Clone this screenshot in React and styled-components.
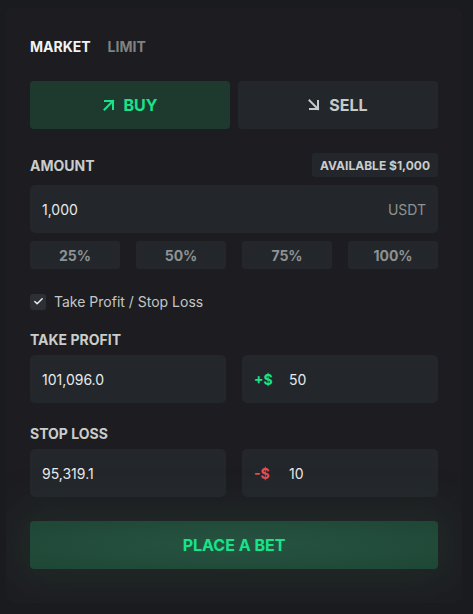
import React, { useState } from "react";
import styled, { createGlobalStyle } from "styled-components";
import { Check } from "lucide-react";

const GlobalStyle = createGlobalStyle`
  html, body {
    margin: 0;
    padding: 0;
    background: #1a1b1f;
    font-family: "Inter", "Noto Sans", sans-serif;
  }
`;

// small diagonal arrow, pointing up-right or down-right
const Arrow = ({ down }) => (
  <svg width="12" height="12" viewBox="0 0 12 12" fill="none" stroke="currentColor" strokeWidth="2" strokeLinecap="square">
    {down ? (
      <>
        <path d="M1.5 1.5 L10 10" />
        <path d="M2 10 H10 V2" />
      </>
    ) : (
      <>
        <path d="M1.5 10.5 L10 2" />
        <path d="M2 2 H10 V10" />
      </>
    )}
  </svg>
);

function App() {
  const [mode, setMode] = useState("market");
  const [side, setSide] = useState("buy");
  const [tpsl, setTpsl] = useState(true);

  return (
    <>
      <GlobalStyle />
      <Card>
        <Tabs>
          <Tab $active={mode === "market"} onClick={() => setMode("market")}>
            MARKET
          </Tab>
          <Tab $active={mode === "limit"} onClick={() => setMode("limit")}>
            LIMIT
          </Tab>
        </Tabs>

        <SideRow>
          <SideBtn $buy $active={side === "buy"} onClick={() => setSide("buy")}>
            <Arrow />
            BUY
          </SideBtn>
          <SideBtn $active={side === "sell"} onClick={() => setSide("sell")}>
            <Arrow down />
            SELL
          </SideBtn>
        </SideRow>

        <AmountHead>
          <Label>AMOUNT</Label>
          <Badge>AVAILABLE $1,000</Badge>
        </AmountHead>
        <Field>
          <Value>1,000</Value>
          <Unit>USDT</Unit>
        </Field>
        <PercentRow>
          <PercentBtn>25%</PercentBtn>
          <PercentBtn>50%</PercentBtn>
          <PercentBtn>75%</PercentBtn>
          <PercentBtn>100%</PercentBtn>
        </PercentRow>

        <CheckRow onClick={() => setTpsl(!tpsl)}>
          <CheckBox>{tpsl && <Check size={11} strokeWidth={3} />}</CheckBox>
          Take Profit / Stop Loss
        </CheckRow>

        <SectionLabel $top={22}>TAKE PROFIT</SectionLabel>
        <PairRow>
          <Field>
            <Value>101,096.0</Value>
          </Field>
          <Field>
            <Sign $color="#19e38b">+$</Sign>
            <Value>50</Value>
          </Field>
        </PairRow>

        <SectionLabel $top={23}>STOP LOSS</SectionLabel>
        <PairRow>
          <Field>
            <Value>95,319.1</Value>
          </Field>
          <Field>
            <Sign $color="#ef4b4f">-$</Sign>
            <Value>10</Value>
          </Field>
        </PairRow>

        <PlaceBtn>PLACE A BET</PlaceBtn>
      </Card>
    </>
  );
}

export default App;

const Card = styled.div`
  margin: 8px 11px 0 6px;
  width: 456px;
  box-sizing: border-box;
  padding: 24px 24px 34px;
  background: #1d1d21;
  border-radius: 6px;
  display: flex;
  flex-direction: column;
  overflow: hidden;
`;

const Tabs = styled.div`
  display: flex;
  gap: 17px;
  height: 28px;
  align-items: center;
`;

const Tab = styled.span`
  font-size: 14px;
  font-weight: 700;
  color: ${(p) => (p.$active ? "#f2f3f3" : "#7f8282")};
  cursor: pointer;
`;

const SideRow = styled.div`
  margin-top: 21px;
  display: grid;
  grid-template-columns: 1fr 1fr;
  gap: 8px;
`;

const SideBtn = styled.button`
  height: 48px;
  border: none;
  border-radius: 4px;
  display: flex;
  align-items: center;
  justify-content: center;
  gap: 9px;
  font-family: inherit;
  font-size: 16px;
  font-weight: 700;
  cursor: pointer;
  background: ${(p) => (p.$active && p.$buy ? "#1e3a2f" : "#23272b")};
  color: ${(p) => (p.$buy ? "#17e38a" : "#c6cbc9")};
`;

const AmountHead = styled.div`
  margin-top: 24px;
  display: flex;
  justify-content: space-between;
  align-items: center;
`;

const Label = styled.span`
  font-size: 14px;
  font-weight: 700;
  color: #c9cdcb;
`;

const Badge = styled.span`
  background: #23272b;
  border-radius: 3px;
  height: 24px;
  padding: 0 8px;
  display: flex;
  align-items: center;
  font-size: 12px;
  font-weight: 700;
  color: #c9cdcb;
`;

const Field = styled.div`
  margin-top: 8px;
  height: 48px;
  background: #23272b;
  border-radius: 5px;
  display: flex;
  align-items: center;
  padding: 0 12px;
  font-size: 14px;
`;

const Value = styled.span`
  color: #e8eaea;
  flex: 1;
`;

const Unit = styled.span`
  color: #8e9292;
`;

const Sign = styled.span`
  color: ${(p) => p.$color};
  font-weight: 700;
  width: 35px;
`;

const PercentRow = styled.div`
  margin-top: 8px;
  display: grid;
  grid-template-columns: repeat(4, 1fr);
  gap: 16px;
`;

const PercentBtn = styled.button`
  height: 28px;
  border: none;
  border-radius: 3px;
  background: #23272b;
  color: #8e9292;
  font-family: inherit;
  font-size: 14px;
  font-weight: 700;
  cursor: pointer;
`;

const CheckRow = styled.label`
  margin-top: 24px;
  display: flex;
  align-items: center;
  gap: 8px;
  font-size: 14px;
  color: #c3c7c6;
  cursor: pointer;
`;

const CheckBox = styled.span`
  width: 16px;
  height: 16px;
  border-radius: 3px;
  background: #2c3034;
  color: #f4f4f4;
  display: flex;
  align-items: center;
  justify-content: center;
`;

const SectionLabel = styled.div`
  margin-top: ${(p) => p.$top}px;
  font-size: 14px;
  font-weight: 700;
  color: #c9cdcb;
  line-height: 16px;
`;

const PairRow = styled.div`
  display: grid;
  grid-template-columns: 1fr 1fr;
  gap: 16px;

  & > div {
    margin-top: 7px;
  }
`;

const PlaceBtn = styled.button`
  margin-top: 24px;
  height: 48px;
  border: none;
  border-radius: 4px;
  background: radial-gradient(ellipse at center, #265341 0%, #1f4636 100%);
  box-shadow: 0 0 40px 10px rgba(40, 70, 55, 0.35);
  color: #17e38a;
  font-family: inherit;
  font-size: 16px;
  font-weight: 700;
  cursor: pointer;
`;
